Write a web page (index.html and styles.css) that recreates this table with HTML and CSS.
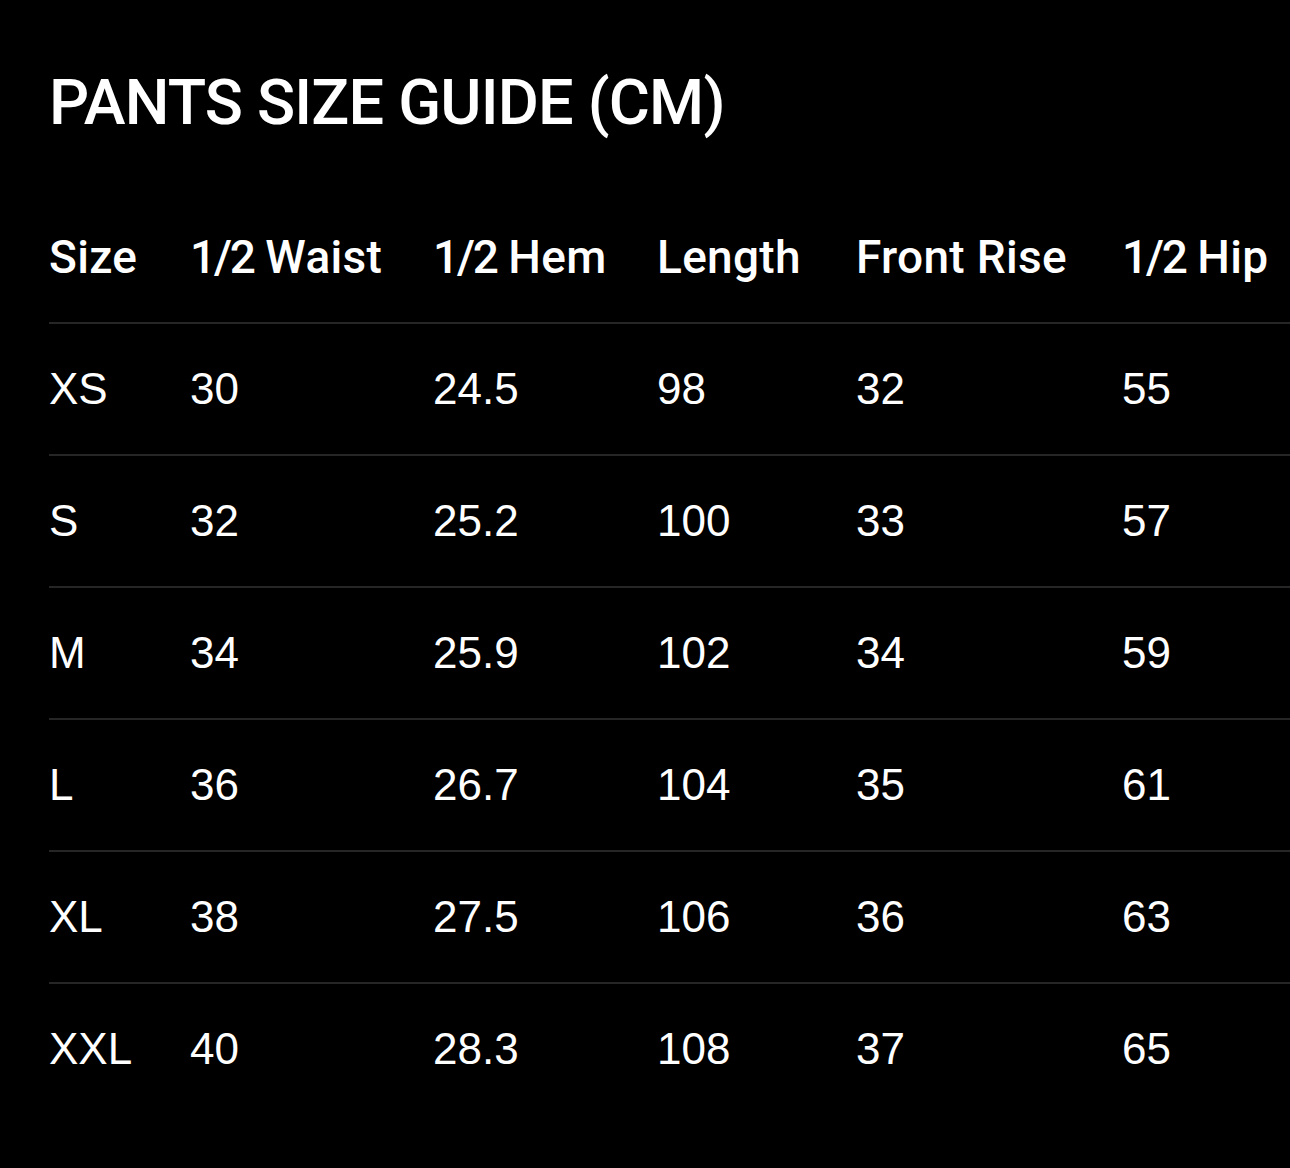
FILE: index.html
```html
<!DOCTYPE html>
<html>
<head>
<meta charset="utf-8">
<link rel="stylesheet" href="styles.css">
</head>
<body>
<h1 class="title">PANTS SIZE GUIDE (CM)</h1>
<div class="table">
  <div class="row head">
    <div class="cell">Size</div>
    <div class="cell"><span class="frac">1/2</span> Waist</div>
    <div class="cell"><span class="frac">1/2</span> Hem</div>
    <div class="cell">Length</div>
    <div class="cell">Front Rise</div>
    <div class="cell"><span class="frac">1/2</span> Hip</div>
  </div>
  <div class="row">
    <div class="cell">XS</div><div class="cell">30</div><div class="cell">24.5</div><div class="cell">98</div><div class="cell">32</div><div class="cell">55</div>
  </div>
  <div class="row">
    <div class="cell">S</div><div class="cell">32</div><div class="cell">25.2</div><div class="cell">100</div><div class="cell">33</div><div class="cell">57</div>
  </div>
  <div class="row">
    <div class="cell">M</div><div class="cell">34</div><div class="cell">25.9</div><div class="cell">102</div><div class="cell">34</div><div class="cell">59</div>
  </div>
  <div class="row">
    <div class="cell">L</div><div class="cell">36</div><div class="cell">26.7</div><div class="cell">104</div><div class="cell">35</div><div class="cell">61</div>
  </div>
  <div class="row">
    <div class="cell">XL</div><div class="cell">38</div><div class="cell">27.5</div><div class="cell">106</div><div class="cell">36</div><div class="cell">63</div>
  </div>
  <div class="row last">
    <div class="cell">XXL</div><div class="cell">40</div><div class="cell">28.3</div><div class="cell">108</div><div class="cell">37</div><div class="cell">65</div>
  </div>
</div>
</body>
</html>
```
FILE: styles.css
```css
html, body {
  margin: 0;
  padding: 0;
  background: #000;
  color: #fff;
}
body {
  padding: 72px 0 0 49px;
  overflow: hidden;
  height: 1168px;
  box-sizing: border-box;
  font-family: "Liberation Sans", Arial, sans-serif;
}
.title {
  margin: 0 0 58px 0;
  font-family: Roboto, "Liberation Sans", sans-serif;
  font-size: 63px;
  line-height: 62px;
  font-weight: 500;
  letter-spacing: -0.8px;
}
.table {
  display: flex;
  flex-direction: column;
}
.row {
  display: grid;
  grid-template-columns: 141px 243px 224px 199px 266px 1fr;
  align-items: center;
  height: 130px;
  border-bottom: 2px solid #262626;
  font-size: 44px;
}
.row.last {
  border-bottom: none;
}
.head {
  font-family: Roboto, "Liberation Sans", sans-serif;
  font-weight: 500;
  font-size: 46px;
  letter-spacing: 0.3px;
}
.frac {
  letter-spacing: -2.2px;
}
.cell {
  white-space: nowrap;
}
```
